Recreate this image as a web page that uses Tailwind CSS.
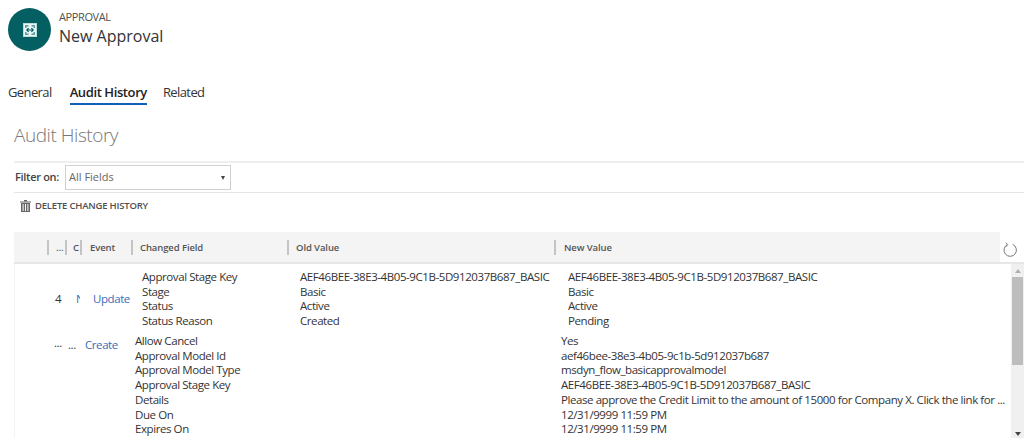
<!DOCTYPE html>
<html lang="en">
<head>
<meta charset="UTF-8">
<title>New Approval</title>
<script src="https://cdn.jsdelivr.net/npm/@tailwindcss/browser@4"></script>
</head>
<body class="bg-white h-[438px] w-[1024px] overflow-hidden font-['Open_Sans',sans-serif] text-[#333]">
  <!-- Record header -->
  <div class="flex items-start pl-2 pt-2 h-[76px]">
    <div class="w-[43px] h-[43px] rounded-full bg-[#045f63] flex items-center justify-center">
      <svg width="14" height="14" viewBox="0 0 14 14" fill="none">
        <rect x="0.5" y="0.5" width="13" height="13" fill="#eaf5f5" stroke="#b9dcdb"/>
        <path d="M2 2h3.5v1.5H3.5V5H2zM12 2H8.5v1.5h2V5H12zM2 12h3.5v-1.5h-2V9H2zM12 12H8.5v-1.5h2V9H12z" fill="#5f9c9e"/>
        <path d="M4 7h6M5.6 5.2 3.8 7l1.8 1.8M8.4 5.2 10.2 7 8.4 8.8" stroke="#045f63" stroke-width="1.2"/>
      </svg>
    </div>
    <div class="ml-[8px]">
      <div class="text-[11px] leading-[14px] mt-[2px] text-[#505050] tracking-[-0.4px]">APPROVAL</div>
      <div class="text-[16px] leading-[20px] mt-[2px] text-[#333]">New Approval</div>
    </div>
  </div>

  <!-- Tabs -->
  <div class="flex pl-2 h-[30px] text-[13px] leading-[18px] tracking-[-0.6px]">
    <div class="pt-[7px] text-[#333]">General</div>
    <div class="ml-[18px] pt-[7px] h-[29px] font-semibold text-[#222] border-b-2 border-[#1160b7] tracking-[-0.4px]">Audit History</div>
    <div class="ml-[16px] pt-[7px] text-[#333]">Related</div>
  </div>

  <div class="pl-[14px] pt-[16px] text-[19px] leading-[26px] font-light text-[#777] tracking-[-0.45px]">Audit History</div>

  <div class="ml-[14px] mt-[13px] h-[32px] flex items-center border-t-2 border-t-[#eeeeee] border-b border-b-[#e4e4e4]">
    <span class="ml-[1px] text-[11px] font-semibold text-[#444] tracking-[-0.3px]">Filter on:</span>
    <div class="ml-[6px] w-[166px] h-[25px] border border-[#d0d0d0] flex items-center justify-between pl-[3px] pr-[5px] text-[11px] text-[#666]">
      <span>All Fields</span>
      <span class="w-0 h-0 border-l-[2.5px] border-r-[2.5px] border-t-[4px] border-l-transparent border-r-transparent border-t-[#444]"></span>
    </div>
  </div>

  <div class="pl-[20px] h-[26px] flex items-center gap-[4px] text-[9.5px] font-semibold text-[#505050] tracking-[-0.2px]">
    <svg width="11" height="12" viewBox="0 0 11 12" fill="#666">
      <rect x="0" y="1.5" width="11" height="1"/><rect x="4" y="0" width="3" height="1.5"/>
      <path d="M1 3h9v9H1zM2.6 4v7h1V4zM5 4v7h1V4zM7.4 4v7h1V4z" fill-rule="evenodd"/>
    </svg>
    DELETE CHANGE HISTORY
  </div>

  <!-- Grid header -->
  <div class="ml-[14px] mt-[13px] h-[32px] border-b-2 border-[#e6e6e6] flex text-[9.5px] font-semibold text-[#555] tracking-[-0.1px]">
    <div class="flex-1 bg-[#f4f4f4] grid grid-cols-[33px_18px_15px_51px_156px_267px_1fr] items-center">
      <span></span>
      <span class="h-[15px] border-l-2 border-[#c4c4c4] pl-[7px] leading-[15px]">...</span>
      <span class="h-[15px] border-l-2 border-[#c4c4c4] pl-[6px] leading-[15px]">C</span>
      <span class="h-[15px] border-l-2 border-[#c4c4c4] pl-[8px] leading-[15px]">Event</span>
      <span class="h-[15px] border-l-2 border-[#c4c4c4] pl-[7px] leading-[15px]">Changed Field</span>
      <span class="h-[15px] border-l-2 border-[#c4c4c4] pl-[7px] leading-[15px]">Old Value</span>
      <span class="h-[15px] border-l-2 border-[#c4c4c4] pl-[8px] leading-[15px]">New Value</span>
    </div>
    <div class="w-[24px] bg-white flex items-center justify-center pt-[5px] pr-[4px]">
      <svg width="16" height="16" viewBox="0 0 16 16" fill="none" stroke="#777" stroke-width="1">
        <path d="M5.4 2.6A6.2 6.2 0 1 0 10.6 2.4"/><path d="M3.8 0.6 5.8 2.6 3.8 4.8"/>
      </svg>
    </div>
  </div>

  <!-- Grid body -->
  <div class="ml-[14px] flex h-[174px] overflow-hidden text-[11.5px] leading-[14.7px] text-[#333] border-l border-[#f4f4f4]">
    <div class="flex-1 min-w-0 tracking-[-0.42px]">
      <div class="grid grid-cols-[61px_17px_49px_158px_268px_1fr] pt-[6px] pb-[6px] h-[70px]">
        <span class="self-center pl-[40px]">4</span>
        <span class="self-center w-[4px] overflow-hidden text-[#3b6bb5]">N</span>
        <span class="self-center text-[#3b6bb5]">Update</span>
        <div><div>Approval Stage Key</div><div>Stage</div><div>Status</div><div>Status Reason</div></div>
        <div><div>AEF46BEE-38E3-4B05-9C1B-5D912037B687_BASIC</div><div>Basic</div><div>Active</div><div>Created</div></div>
        <div><div>AEF46BEE-38E3-4B05-9C1B-5D912037B687_BASIC</div><div>Basic</div><div>Active</div><div>Pending</div></div>
      </div>
      <div class="grid grid-cols-[53px_17px_50px_426px_minmax(0,1fr)]">
        <span class="pl-[39px] mt-[2px]">...</span>
        <span class="mt-[4px]">...</span>
        <span class="mt-[4px] text-[#3b6bb5]">Create</span>
        <div>
          <div>Allow Cancel</div><div>Approval Model Id</div><div>Approval Model Type</div><div>Approval Stage Key</div><div>Details</div><div>Due On</div><div>Expires On</div>
        </div>
        <div class="min-w-0 whitespace-nowrap">
          <div>Yes</div>
          <div>aef46bee-38e3-4b05-9c1b-5d912037b687</div>
          <div>msdyn_flow_basicapprovalmodel</div>
          <div>AEF46BEE-38E3-4B05-9C1B-5D912037B687_BASIC</div>
          <div>Please approve the Credit Limit to the amount of 15000 for Company X. Click the link for ...</div>
          <div>12/31/9999 11:59 PM</div>
          <div>12/31/9999 11:59 PM</div>
        </div>
      </div>
    </div>
    <!-- Scrollbar -->
    <div class="w-[13px] bg-[#f0f0f0] flex flex-col items-center justify-between pt-[5px] pb-[2px]">
      <div class="flex flex-col items-center w-full">
        <span class="w-0 h-0 border-l-[3px] border-r-[3px] border-b-[4px] border-l-transparent border-r-transparent border-b-[#b0b0b0]"></span>
        <div class="w-[11px] h-[88px] mt-[4px] bg-[#bdbdbd]"></div>
      </div>
      <span class="w-0 h-0 border-l-[3px] border-r-[3px] border-t-[4px] border-l-transparent border-r-transparent border-t-[#444]"></span>
    </div>
  </div>
</body>
</html>
